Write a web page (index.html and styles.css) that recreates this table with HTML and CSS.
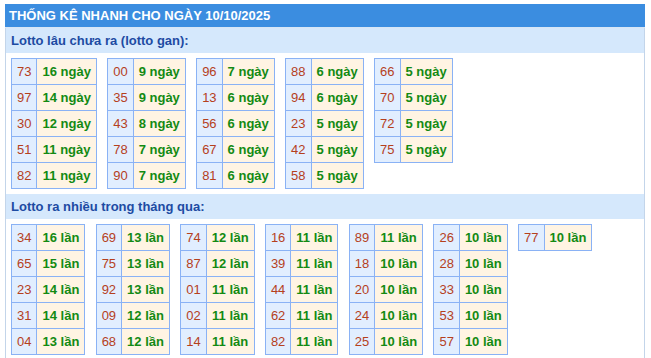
FILE: index.html
```html
<!DOCTYPE html>
<html lang="vi">
<head>
<meta charset="utf-8">
<title>Thống kê nhanh</title>
<link rel="stylesheet" href="styles.css">
</head>
<body>
<div class="wrap">
  <div class="title">THỐNG KÊ NHANH CHO NGÀY 10/10/2025</div>
  <div class="box">
    <div class="sec-h">Lotto lâu chưa ra (lotto gan):</div>
    <div class="tables">
      <table><tr><td class="n">73</td><td class="v">16 ngày</td></tr><tr><td class="n">97</td><td class="v">14 ngày</td></tr><tr><td class="n">30</td><td class="v">12 ngày</td></tr><tr><td class="n">51</td><td class="v">11 ngày</td></tr><tr><td class="n">82</td><td class="v">11 ngày</td></tr></table>
      <table><tr><td class="n">00</td><td class="v">9 ngày</td></tr><tr><td class="n">35</td><td class="v">9 ngày</td></tr><tr><td class="n">43</td><td class="v">8 ngày</td></tr><tr><td class="n">78</td><td class="v">7 ngày</td></tr><tr><td class="n">90</td><td class="v">7 ngày</td></tr></table>
      <table><tr><td class="n">96</td><td class="v">7 ngày</td></tr><tr><td class="n">13</td><td class="v">6 ngày</td></tr><tr><td class="n">56</td><td class="v">6 ngày</td></tr><tr><td class="n">67</td><td class="v">6 ngày</td></tr><tr><td class="n">81</td><td class="v">6 ngày</td></tr></table>
      <table><tr><td class="n">88</td><td class="v">6 ngày</td></tr><tr><td class="n">94</td><td class="v">6 ngày</td></tr><tr><td class="n">23</td><td class="v">5 ngày</td></tr><tr><td class="n">42</td><td class="v">5 ngày</td></tr><tr><td class="n">58</td><td class="v">5 ngày</td></tr></table>
      <table><tr><td class="n">66</td><td class="v">5 ngày</td></tr><tr><td class="n">70</td><td class="v">5 ngày</td></tr><tr><td class="n">72</td><td class="v">5 ngày</td></tr><tr><td class="n">75</td><td class="v">5 ngày</td></tr></table>
    </div>
    <div class="sec-h">Lotto ra nhiều trong tháng qua:</div>
    <div class="tables">
      <table><tr><td class="n">34</td><td class="v">16 lần</td></tr><tr><td class="n">65</td><td class="v">15 lần</td></tr><tr><td class="n">23</td><td class="v">14 lần</td></tr><tr><td class="n">31</td><td class="v">14 lần</td></tr><tr><td class="n">04</td><td class="v">13 lần</td></tr></table>
      <table><tr><td class="n">69</td><td class="v">13 lần</td></tr><tr><td class="n">75</td><td class="v">13 lần</td></tr><tr><td class="n">92</td><td class="v">13 lần</td></tr><tr><td class="n">09</td><td class="v">12 lần</td></tr><tr><td class="n">68</td><td class="v">12 lần</td></tr></table>
      <table><tr><td class="n">74</td><td class="v">12 lần</td></tr><tr><td class="n">87</td><td class="v">12 lần</td></tr><tr><td class="n">01</td><td class="v">11 lần</td></tr><tr><td class="n">02</td><td class="v">11 lần</td></tr><tr><td class="n">14</td><td class="v">11 lần</td></tr></table>
      <table><tr><td class="n">16</td><td class="v">11 lần</td></tr><tr><td class="n">39</td><td class="v">11 lần</td></tr><tr><td class="n">44</td><td class="v">11 lần</td></tr><tr><td class="n">62</td><td class="v">11 lần</td></tr><tr><td class="n">82</td><td class="v">11 lần</td></tr></table>
      <table><tr><td class="n">89</td><td class="v">11 lần</td></tr><tr><td class="n">18</td><td class="v">10 lần</td></tr><tr><td class="n">20</td><td class="v">10 lần</td></tr><tr><td class="n">24</td><td class="v">10 lần</td></tr><tr><td class="n">25</td><td class="v">10 lần</td></tr></table>
      <table><tr><td class="n">26</td><td class="v">10 lần</td></tr><tr><td class="n">28</td><td class="v">10 lần</td></tr><tr><td class="n">33</td><td class="v">10 lần</td></tr><tr><td class="n">53</td><td class="v">10 lần</td></tr><tr><td class="n">57</td><td class="v">10 lần</td></tr></table>
      <table><tr><td class="n">77</td><td class="v">10 lần</td></tr></table>
    </div>
  </div>
</div>
</body>
</html>
```

FILE: styles.css
```css
html, body {
  margin: 0;
  padding: 0;
  background: #ffffff;
}
body {
  font-family: "Liberation Sans", Arial, sans-serif;
  font-size: 13px;
}
.wrap {
  margin: 4px 0 0 5px;
  width: 640px;
}
.title {
  background: #3b8de0;
  color: #ffffff;
  font-weight: bold;
  height: 23px;
  line-height: 23px;
  padding-left: 4px;
  border-bottom: 1px solid #d8e6f5;
}
.box {
  border: 1px solid #c3d5ea;
  border-top: 0;
  padding-bottom: 2px;
}
.sec-h {
  background: #d5e8fc;
  color: #1d4ba3;
  font-weight: bold;
  height: 25px;
  line-height: 25px;
  padding-left: 5px;
}
.tables {
  display: flex;
  align-items: flex-start;
  gap: 10.3px;
  padding: 5px 5px 5px 5px;
}
table {
  border-collapse: collapse;
}
td {
  border: 1px solid #8ab2f5;
  height: 25px;
  padding: 0 5px;
  white-space: nowrap;
  text-align: center;
}
td.n {
  background: #e1eeff;
  color: #b5401d;
}
td.v {
  background: #fff4e3;
  color: #138a13;
  font-weight: bold;
}
```
